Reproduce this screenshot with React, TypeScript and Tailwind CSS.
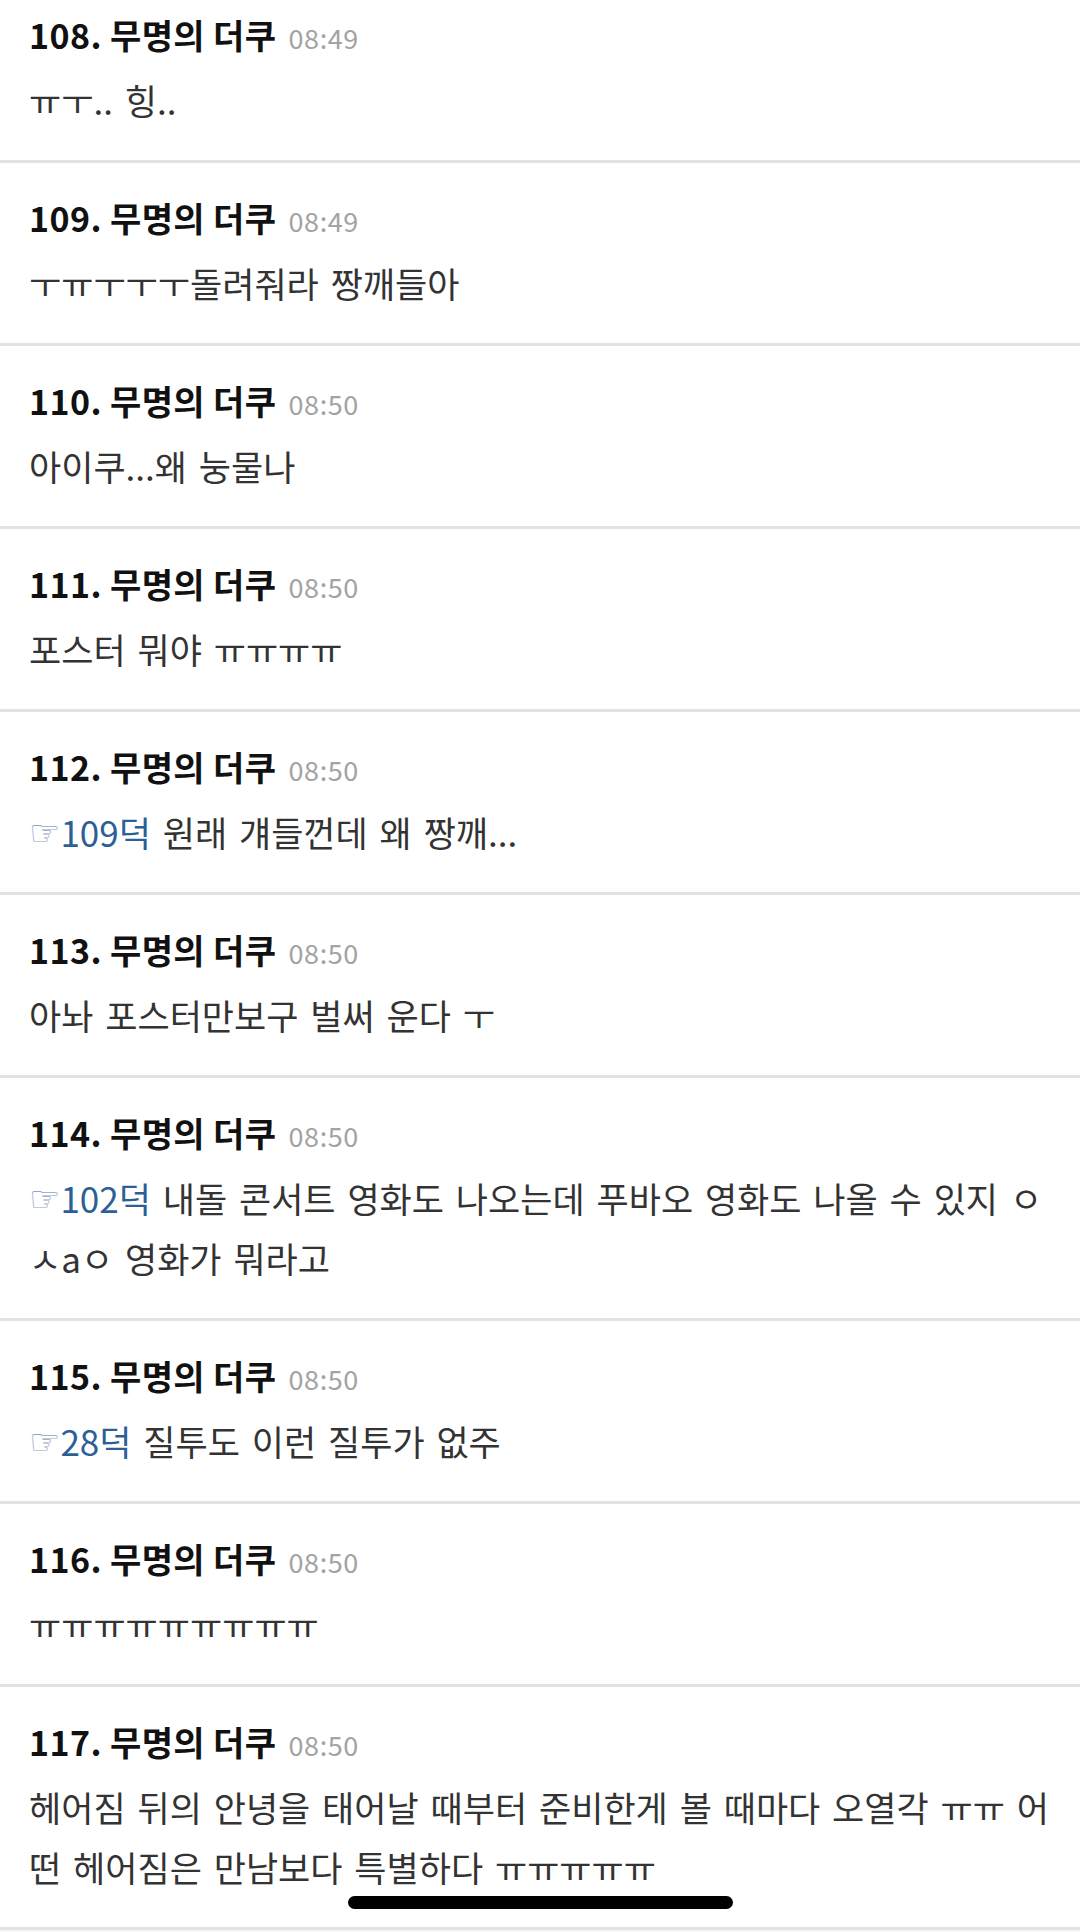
type Ref = { to: string };

interface Comment {
  no: number;
  time: string;
  reply?: Ref;
  lines: string[];
}

const comments: Comment[] = [
  { no: 108, time: '08:49', lines: ['ㅠㅜ.. 힝..'] },
  { no: 109, time: '08:49', lines: ['ㅜㅠㅜㅜㅜ돌려줘라 짱깨들아'] },
  { no: 110, time: '08:50', lines: ['아이쿠...왜 눙물나'] },
  { no: 111, time: '08:50', lines: ['포스터 뭐야 ㅠㅠㅠㅠ'] },
  { no: 112, time: '08:50', reply: { to: '109덕' }, lines: ['원래 걔들껀데 왜 짱깨...'] },
  { no: 113, time: '08:50', lines: ['아놔 포스터만보구 벌써 운다 ㅜ'] },
  {
    no: 114,
    time: '08:50',
    reply: { to: '102덕' },
    lines: ['내돌 콘서트 영화도 나오는데 푸바오 영화도 나올 수 있지 ㅇ', 'ㅅaㅇ 영화가 뭐라고'],
  },
  { no: 115, time: '08:50', reply: { to: '28덕' }, lines: ['질투도 이런 질투가 없주'] },
  { no: 116, time: '08:50', lines: ['ㅠㅠㅠㅠㅠㅠㅠㅠㅠ'] },
  {
    no: 117,
    time: '08:50',
    lines: [
      '헤어짐 뒤의 안녕을 태어날 때부터 준비한게 볼 때마다 오열각 ㅠㅠ 어',
      '떤 헤어짐은 만남보다 특별하다 ㅠㅠㅠㅠㅠ',
    ],
  },
];

function CommentItem({ c }: { c: Comment }) {
  return (
    <li className="border-b-[3px] border-[#e2e2e2] pl-[29px] pr-[10px] pt-[33px] pb-[30px]">
      <div className="flex h-[44px] items-baseline gap-[12px] leading-[44px]">
        <span className="text-[34px] font-bold text-[#111111] tracking-[0.4px]">
          {c.no}. 무명의 더쿠
        </span>
        <span className="text-[27px] text-[#a3a3a3] tracking-[0.6px]">{c.time}</span>
      </div>
      <div className="mt-[13px] text-[35px] leading-[60px] text-[#333333] [word-spacing:4px]">
        {c.lines.map((line, i) => (
          <p key={i} className="h-[60px] whitespace-nowrap">
            {i === 0 && c.reply && (
              <>
                <span className="inline-block h-[30px] align-[2px] text-[35px] leading-[30px] text-[#8fa6c4] font-['DejaVu_Sans',sans-serif]">
                  ☞
                </span>
                <span className="text-[#2d5f97]">{c.reply.to}</span>{' '}
              </>
            )}
            {line}
          </p>
        ))}
      </div>
    </li>
  );
}

export default function App() {
  return (
    <div className="relative h-[1932px] w-[1080px] overflow-hidden bg-[#f6f6f6] font-['Noto_Sans_CJK_KR','Noto_Sans',sans-serif]">
      <ul className="-mt-[20px] bg-white">
        {comments.map((c) => (
          <CommentItem key={c.no} c={c} />
        ))}
      </ul>
      <div className="absolute left-[348px] top-[1896px] h-[13px] w-[385px] rounded-full bg-black" />
    </div>
  );
}
